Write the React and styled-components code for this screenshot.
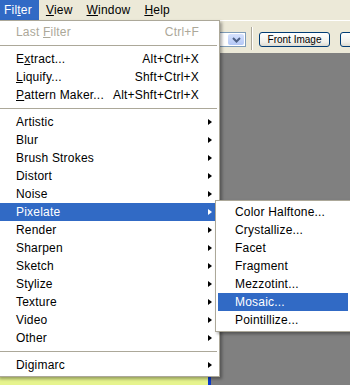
import React from 'react';
import styled, { createGlobalStyle } from 'styled-components';

const GlobalStyle = createGlobalStyle`
  html, body { margin: 0; padding: 0; background: #808080; }
  body { font-family: "Liberation Sans", Arial, sans-serif; }
  * { box-sizing: border-box; }
`;

const Screen = styled.div`
  position: relative;
  width: 350px;
  height: 385px;
  overflow: hidden;
  display: flex;
  flex-direction: column;
  background: #808080;
  font-size: 12px;
  letter-spacing: 0.2px;
  color: #000;
`;

const MenuBar = styled.div`
  display: flex;
  height: 20px;
  margin-left: -3px;
  background: #ECE9D8;
  flex-shrink: 0;
`;

const MenuTitle = styled.div`
  padding: 0 7px;
  line-height: 20px;
  height: 20px;
  background: ${p => (p.$active ? '#316AC5' : 'transparent')};
  color: ${p => (p.$active ? '#FFFFFF' : '#000000')};
  u { text-decoration: underline; text-underline-offset: 1px; }
`;

const Toolbar = styled.div`
  display: flex;
  align-items: flex-start;
  height: 33px;
  flex-shrink: 0;
  overflow: hidden;
  padding: 11px 0 0 176px;
  background: #ECE9D8;
  border-top: 1px solid #FFFFFF;
  & > * { flex-shrink: 0; }
`;

const Combo = styled.div`
  display: flex;
  width: 70px;
  height: 15px;
  border: 1px solid #7F9DB9;
  background: #FFFFFF;
  padding: 1px;
`;

const ComboField = styled.div`
  flex: 1;
`;

const ComboButton = styled.div`
  width: 16px;
  height: 11px;
  border-radius: 2px;
  background: linear-gradient(#D6E2FD, #B4C8F6);
  display: flex;
  align-items: center;
  justify-content: center;
`;

const ToolSeparator = styled.div`
  width: 2px;
  height: 23px;
  margin: -5px 0 0 5px;
  border-left: 1px solid #ACA899;
  border-right: 1px solid #FFFFFF;
`;

const ToolButton = styled.div`
  width: ${p => p.$w}px;
  height: 15px;
  margin-left: ${p => p.$gap}px;
  border: 1px solid #003C74;
  border-radius: 3px;
  background: linear-gradient(#FFFFFF, #F0F0EA 70%, #DCDAD0);
  font-size: 10px;
  letter-spacing: 0;
  line-height: 13px;
  text-align: center;
  white-space: nowrap;
`;

const Workspace = styled.div`
  flex: 1;
  display: flex;
  background: #808080;
`;

const DocPanel = styled.div`
  width: 211px;
  background: #E6F48E;
  border-right: 3px solid #0A3ACB;
`;

const Menu = styled.div`
  position: absolute;
  left: ${p => p.$left}px;
  top: ${p => p.$top}px;
  width: ${p => p.$width}px;
  padding: 2px;
  background: #FFFFFF;
  border: 1px solid #ACA899;
  box-shadow: 2px 2px 3px rgba(0, 0, 0, 0.35);
  display: flex;
  flex-direction: column;
`;

const Item = styled.div`
  display: flex;
  align-items: center;
  height: 18px;
  padding-left: ${p => p.$indent}px;
  background: ${p => (p.$active ? '#316AC5' : 'transparent')};
  color: ${p => (p.$active ? '#FFFFFF' : p.$disabled ? '#ACA899' : '#000000')};
  white-space: nowrap;
  u { text-decoration: underline; text-underline-offset: 1px; }
`;

const Label = styled.span`
  flex: 1;
`;

const Shortcut = styled.span`
  margin-right: 18px;
`;

const Arrow = styled.span`
  width: 0;
  height: 0;
  margin-right: 5px;
  border-left: 4px solid ${p => (p.$active ? '#FFFFFF' : '#000000')};
  border-top: 3.5px solid transparent;
  border-bottom: 3.5px solid transparent;
`;

const Separator = styled.div`
  height: 9px;
  display: flex;
  align-items: center;
  &::after {
    content: '';
    flex: 1;
    height: 1px;
    background: #ACA899;
  }
`;

const topItems = [
  { label: <>Last <u>F</u>ilter</>, shortcut: 'Ctrl+F', disabled: true },
  'sep',
  { label: <>E<u>x</u>tract...</>, shortcut: 'Alt+Ctrl+X' },
  { label: <><u>L</u>iquify...</>, shortcut: 'Shft+Ctrl+X' },
  { label: <><u>P</u>attern Maker...</>, shortcut: 'Alt+Shft+Ctrl+X' },
  'sep',
  ...['Artistic', 'Blur', 'Brush Strokes', 'Distort', 'Noise', 'Pixelate', 'Render',
    'Sharpen', 'Sketch', 'Stylize', 'Texture', 'Video', 'Other'].map(l => ({
    label: l, sub: true, active: l === 'Pixelate',
  })),
  'sep',
  { label: 'Digimarc', sub: true },
];

const subItems = ['Color Halftone...', 'Crystallize...', 'Facet', 'Fragment', 'Mezzotint...', 'Mosaic...', 'Pointillize...'];

function MenuRows({ items, indent }) {
  return items.map((it, i) => {
    if (it === 'sep') return <Separator key={i} />;
    return (
      <Item key={i} $indent={indent} $active={it.active} $disabled={it.disabled}>
        <Label>{it.label}</Label>
        {it.shortcut && <Shortcut>{it.shortcut}</Shortcut>}
        {it.sub && <Arrow $active={it.active} />}
      </Item>
    );
  });
}

export default function App() {
  return (
    <>
      <GlobalStyle />
      <Screen>
        <MenuBar>
          <MenuTitle $active>Fil<u>t</u>er</MenuTitle>
          <MenuTitle><u>V</u>iew</MenuTitle>
          <MenuTitle><u>W</u>indow</MenuTitle>
          <MenuTitle><u>H</u>elp</MenuTitle>
        </MenuBar>
        <Toolbar>
          <Combo>
            <ComboField />
            <ComboButton>
              <svg width="9" height="6" viewBox="0 0 9 6">
                <path d="M1 1 L4.5 4.5 L8 1" fill="none" stroke="#4D6185" strokeWidth="2" />
              </svg>
            </ComboButton>
          </Combo>
          <ToolSeparator />
          <ToolButton $w={71} $gap={6}>Front Image</ToolButton>
          <ToolButton $w={60} $gap={10} />
        </Toolbar>
        <Workspace>
          <DocPanel />
        </Workspace>
        <Menu $left={-3} $top={20} $width={223}>
          <MenuRows items={topItems} indent={16} />
        </Menu>
        <Menu $left={215} $top={200} $width={136}>
          <MenuRows items={subItems.map(l => ({ label: l, active: l === 'Mosaic...' }))} indent={17} />
        </Menu>
      </Screen>
    </>
  );
}
